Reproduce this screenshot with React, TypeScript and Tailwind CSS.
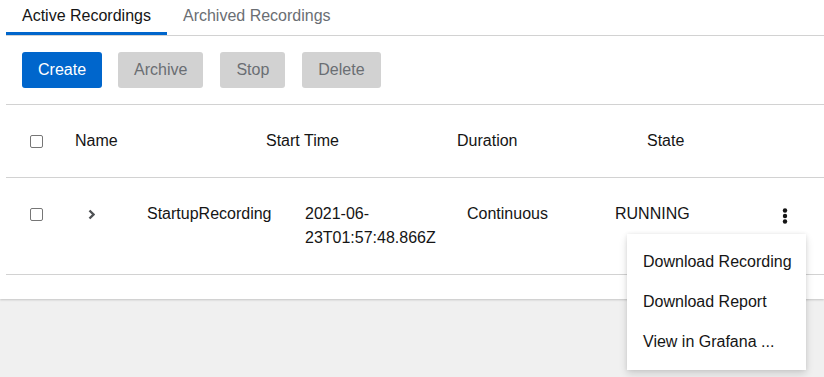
import React, { useState } from 'react';

const FONT = { fontFamily: '"Liberation Sans", Arial, sans-serif' };

function Check() {
  return <div className="w-[13px] h-[13px] rounded-[2px] border border-[#767676] bg-white" />;
}

function Kebab() {
  return (
    <svg width="6" height="16" viewBox="0 0 6 16" className="text-[#151515]">
      <circle cx="3" cy="2.5" r="2.2" fill="currentColor" />
      <circle cx="3" cy="8" r="2.2" fill="currentColor" />
      <circle cx="3" cy="13.5" r="2.2" fill="currentColor" />
    </svg>
  );
}

export default function App() {
  const [tab, setTab] = useState(0);
  const tabs = ['Active Recordings', 'Archived Recordings'];
  const menuItems = ['Download Recording', 'Download Report', 'View in Grafana ...'];

  return (
    <div className="min-h-screen bg-[#f0f0f0] text-[#151515] text-[16px] leading-6" style={FONT}>
      <div className="bg-white pl-[6px] pb-[24px] shadow-[0_1px_2px_rgba(0,0,0,0.18)]">
        {/* Tabs */}
        <div className="flex h-[36px] border-b border-[#d2d2d2]">
          {tabs.map((t, i) => (
            <button
              key={t}
              onClick={() => setTab(i)}
              className={`relative px-4 h-[35px] flex items-start pt-[4px] ${
                i === tab ? 'text-[#151515]' : 'text-[#6a6e73]'
              }`}
            >
              {t}
              {i === tab && <span className="absolute left-0 right-0 bottom-0 h-[3px] bg-[#0066cc]" />}
            </button>
          ))}
        </div>

        {/* Toolbar */}
        <div className="flex gap-4 px-4 pt-4 pb-4">
          <button className="h-[36px] px-4 rounded-[3px] bg-[#0066cc] text-white">Create</button>
          <button className="h-[36px] px-4 rounded-[3px] bg-[#d2d2d2] text-[#6a6e73]">Archive</button>
          <button className="h-[36px] px-4 rounded-[3px] bg-[#d2d2d2] text-[#6a6e73] ml-px">Stop</button>
          <button className="h-[36px] px-4 rounded-[3px] bg-[#d2d2d2] text-[#6a6e73] ml-px">Delete</button>
        </div>

        {/* Header row */}
        <div className="flex items-center h-[74px] border-t border-b border-[#d2d2d2]">
          <div className="w-[69px] pl-6">
            <Check />
          </div>
          <div className="w-[191px]">Name</div>
          <div className="w-[191px]">Start Time</div>
          <div className="w-[190px]">Duration</div>
          <div>State</div>
        </div>

        {/* Data row */}
        <div className="relative flex items-start pt-6 pb-6 border-b border-[#d2d2d2]">
          <div className="w-[69px] pl-6 h-6 flex items-center">
            <Check />
          </div>
          <div className="w-[72px] pl-[13px] h-6 flex items-center">
            <svg width="7" height="11" viewBox="0 0 7 11">
              <path d="M1.5 1.5 L5.5 5.5 L1.5 9.5" fill="none" stroke="#4f5255" strokeWidth="2.4" />
            </svg>
          </div>
          <div className="w-[158px]">StartupRecording</div>
          <div className="w-[162px] pr-6">2021-06-23T01:57:48.866Z</div>
          <div className="w-[148px]">Continuous</div>
          <div className="w-[154px]">RUNNING</div>
          <div className="w-[32px] h-6 flex items-center justify-center pt-[4px]">
            <Kebab />
          </div>

          <div className="absolute right-[18px] top-[56px] w-[179px] bg-white py-2 z-10 shadow-[0_4px_8px_rgba(3,3,3,0.14),0_0_4px_rgba(3,3,3,0.08)]">
            {menuItems.map(m => (
              <div key={m} className="h-[40px] px-4 flex items-center whitespace-nowrap">
                {m}
              </div>
            ))}
          </div>
        </div>
      </div>
    </div>
  );
}
